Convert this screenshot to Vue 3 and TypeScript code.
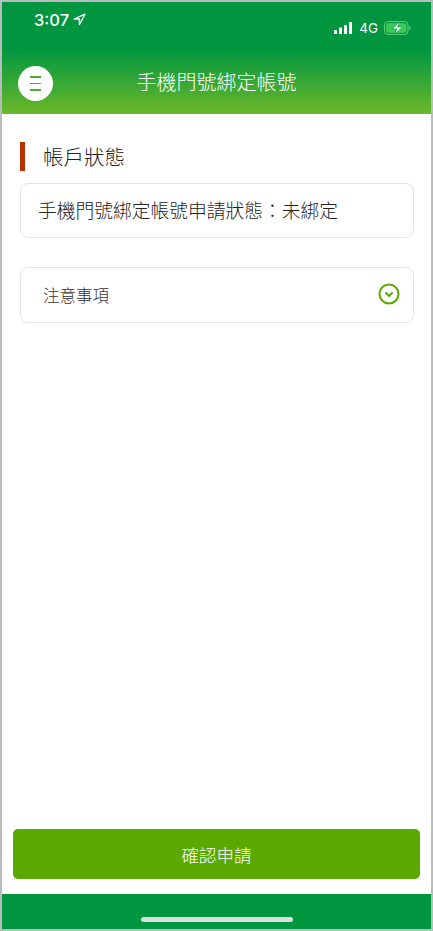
<script setup lang="ts">
const title = '手機門號綁定帳號'
const bars = [
  { x: 0, y: 8, h: 4 },
  { x: 5, y: 5.5, h: 6.5 },
  { x: 10, y: 3, h: 9 },
  { x: 15, y: 0, h: 12 },
]
</script>

<template>
  <div class="phone">
    <header class="header">
      <div class="status">
        <div class="time">
          <span>3:07</span>
          <svg class="arrow" width="13" height="13" viewBox="0 0 13 13">
            <path d="M12 1.2 1.2 6h5.2v5.6z" fill="none" stroke="#fff" stroke-width="1.3" stroke-linejoin="round" />
          </svg>
        </div>
        <div class="indicators">
          <svg class="signal" width="18" height="12" viewBox="0 0 18 12">
            <rect v-for="b in bars" :key="b.x" :x="b.x" :y="b.y" width="3" :height="b.h" rx="0.6" fill="#fff" />
          </svg>
          <span class="net">4G</span>
          <svg class="battery" width="27" height="14" viewBox="0 0 27 14">
            <rect x="0.6" y="0.6" width="23.4" height="12.8" rx="3.4" fill="none" stroke="#6ccb82" stroke-width="1" />
            <rect x="2.2" y="2.2" width="20.2" height="9.6" rx="2" fill="#3ccb55" />
            <path d="M25.2 5v4c.9-.3 1.4-1 1.4-2s-.5-1.7-1.4-2z" fill="#6ccb82" />
            <path d="M16.4 0 7 8h5l-2.4 6L19 5.6h-5z" fill="#0b9a45" />
            <path d="M15.4 1.6 8.6 7.4h4.7l-1.9 4.8 6.3-5.9h-4.6z" fill="#fff" />
          </svg>
        </div>
      </div>
      <div class="nav">
        <button class="menu" type="button" aria-label="menu">
          <span></span><span></span><span></span>
        </button>
        <h1>{{ title }}</h1>
      </div>
    </header>

    <main class="content">
      <h2 class="section">帳戶狀態</h2>
      <div class="card status-card">手機門號綁定帳號申請狀態：未綁定</div>
      <div class="card notice">
        <span>注意事項</span>
        <svg width="22" height="22" viewBox="0 0 22 22">
          <circle cx="11" cy="11" r="9.5" fill="none" stroke="#5aa800" stroke-width="2" />
          <path d="M7.4 9.4 11 13l3.6-3.6" fill="none" stroke="#5aa800" stroke-width="2" />
        </svg>
      </div>
      <div class="action">
        <button class="confirm" type="button">確認申請</button>
      </div>
    </main>

    <footer class="footer">
      <div class="home"></div>
    </footer>
  </div>
</template>

<style>
html,
body {
  margin: 0;
  background: #fff;
}
</style>

<style scoped>
.phone {
  box-sizing: border-box;
  width: 433px;
  height: 931px;
  border: 2px solid #b9bcbc;
  display: flex;
  flex-direction: column;
  background: #fff;
  font-family: "Liberation Sans", "Noto Sans CJK TC", sans-serif;
  font-weight: 300;
  overflow: hidden;
}
.header {
  height: 112px;
  flex: none;
  background: linear-gradient(180deg, #009640 0%, #009640 42%, #6cb82a 100%);
  color: #fff;
  display: flex;
  flex-direction: column;
}
.status {
  height: 50px;
  display: flex;
  justify-content: space-between;
  padding: 0 20px 0 32px;
  flex: none;
}
.time {
  display: flex;
  align-items: center;
  gap: 4px;
  height: 36px;
  font-family: "Inter", "Liberation Sans", sans-serif;
  font-size: 16.5px;
  font-weight: 500;
}
.arrow {
  margin-top: -2px;
}
.indicators {
  display: flex;
  align-items: center;
  gap: 6px;
  height: 52px;
}
.signal {
  margin-right: 1px;
}
.net {
  font-family: "Inter", "Liberation Sans", sans-serif;
  font-size: 13.5px;
  font-weight: 400;
}
.nav {
  position: relative;
  flex: 1;
  display: flex;
  align-items: center;
  justify-content: center;
}
.nav h1 {
  margin: 0;
  font-size: 20px;
  font-weight: 300;
  line-height: 28px;
}
.menu {
  position: absolute;
  left: 16px;
  top: 14px;
  width: 35px;
  height: 35px;
  padding: 0;
  border: 0;
  border-radius: 50%;
  background: #fff;
  display: flex;
  flex-direction: column;
  align-items: center;
  justify-content: center;
  gap: 5px;
}
.menu span {
  width: 11px;
  height: 1.5px;
  background: #4fa935;
}
.content {
  flex: 1;
  display: flex;
  flex-direction: column;
  padding: 28px 17px 15px 18px;
  color: #222;
}
.section {
  margin: 0 0 12px;
  height: 29px;
  border-left: 5px solid #b83200;
  padding-left: 18px;
  font-size: 20.5px;
  font-weight: 300;
  line-height: 31px;
}
.card {
  box-sizing: border-box;
  width: 394px;
  border: 1px solid #e2e4e4;
  border-radius: 8px;
  background: #fff;
}
.status-card {
  height: 55px;
  padding-left: 17px;
  font-size: 18.75px;
  line-height: 55px;
  white-space: nowrap;
}
.notice {
  height: 56px;
  margin-top: 29px;
  padding: 0 13px 0 22px;
  display: flex;
  align-items: center;
  justify-content: space-between;
  font-size: 16.5px;
  color: #333;
}
.notice svg {
  margin-top: -2px;
}
.action {
  margin-top: auto;
  margin-left: -7px;
}
.confirm {
  display: block;
  width: 407px;
  height: 50px;
  padding: 0;
  border: 0;
  border-radius: 5px;
  background: #5aa800;
  color: #fff;
  font-family: inherit;
  font-size: 17.5px;
  font-weight: 300;
}
.footer {
  height: 35px;
  flex: none;
  background: #009640;
  position: relative;
}
.home {
  position: absolute;
  left: 139px;
  bottom: 7px;
  width: 152px;
  height: 5px;
  border-radius: 3px;
  background: #dcdfe0;
}
</style>
